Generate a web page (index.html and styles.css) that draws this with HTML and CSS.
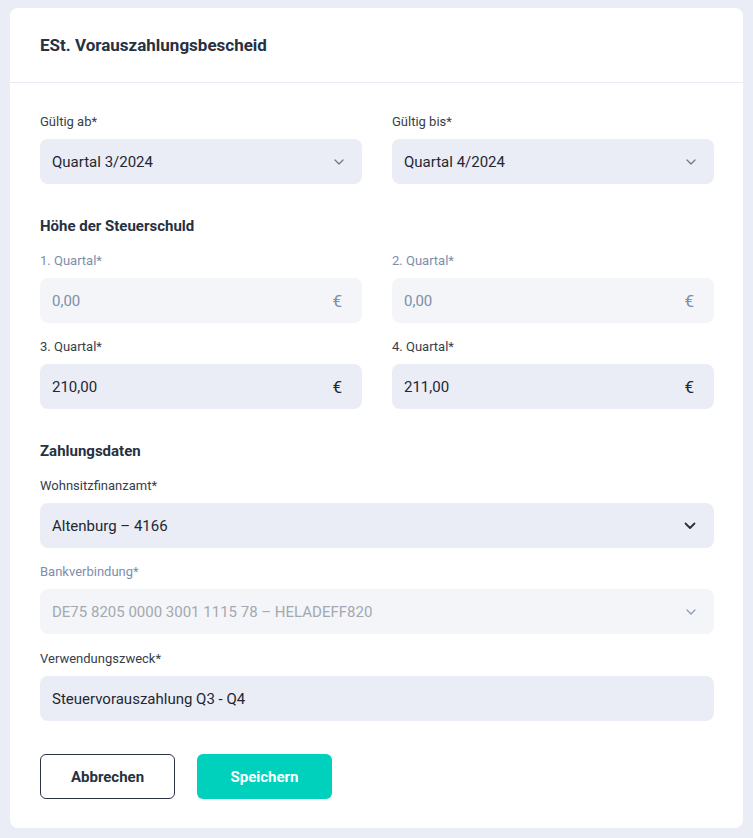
FILE: index.html
```html
<!DOCTYPE html>
<html lang="de">
<head>
<meta charset="utf-8">
<title>ESt. Vorauszahlungsbescheid</title>
<link rel="stylesheet" href="styles.css">
</head>
<body>
<div class="card">
  <div class="card-header">
    <h1 class="title">ESt. Vorauszahlungsbescheid</h1>
  </div>
  <form class="card-body">
    <div class="row">
      <div class="field">
        <label class="label">Gültig ab*</label>
        <div class="control">
          <span class="value">Quartal 3/2024</span>
          <svg class="chev chev-light" width="10" height="6" viewBox="0 0 10 6"><path d="M1 1l4 4 4-4" fill="none" stroke="currentColor" stroke-width="1.2" stroke-linecap="round" stroke-linejoin="round"/></svg>
        </div>
      </div>
      <div class="field">
        <label class="label">Gültig bis*</label>
        <div class="control">
          <span class="value">Quartal 4/2024</span>
          <svg class="chev chev-light" width="10" height="6" viewBox="0 0 10 6"><path d="M1 1l4 4 4-4" fill="none" stroke="currentColor" stroke-width="1.2" stroke-linecap="round" stroke-linejoin="round"/></svg>
        </div>
      </div>
    </div>

    <h2 class="section">Höhe der Steuerschuld</h2>
    <div class="row tight">
      <div class="field">
        <label class="label disabled">1. Quartal*</label>
        <div class="control is-disabled">
          <span class="value">0,00</span>
          <span class="euro">€</span>
        </div>
      </div>
      <div class="field">
        <label class="label disabled">2. Quartal*</label>
        <div class="control is-disabled">
          <span class="value">0,00</span>
          <span class="euro">€</span>
        </div>
      </div>
    </div>
    <div class="row">
      <div class="field">
        <label class="label">3. Quartal*</label>
        <div class="control">
          <span class="value">210,00</span>
          <span class="euro">€</span>
        </div>
      </div>
      <div class="field">
        <label class="label">4. Quartal*</label>
        <div class="control">
          <span class="value">211,00</span>
          <span class="euro">€</span>
        </div>
      </div>
    </div>

    <h2 class="section">Zahlungsdaten</h2>
    <div class="field gap">
      <label class="label">Wohnsitzfinanzamt*</label>
      <div class="control">
        <span class="value">Altenburg – 4166</span>
        <svg class="chev chev-dark" width="12" height="8" viewBox="0 0 12 8"><path d="M1.5 1.5l4.5 4.5 4.5-4.5" fill="none" stroke="currentColor" stroke-width="1.8" stroke-linecap="round" stroke-linejoin="round"/></svg>
      </div>
    </div>
    <div class="field gap gap-wide">
      <label class="label disabled">Bankverbindung*</label>
      <div class="control is-disabled">
        <span class="value muted">DE75 8205 0000 3001 1115 78 – HELADEFF820</span>
        <svg class="chev chev-blue" width="10" height="6" viewBox="0 0 10 6"><path d="M1 1l4 4 4-4" fill="none" stroke="currentColor" stroke-width="1.2" stroke-linecap="round" stroke-linejoin="round"/></svg>
      </div>
    </div>
    <div class="field">
      <label class="label">Verwendungszweck*</label>
      <div class="control">
        <span class="value">Steuervorauszahlung Q3 - Q4</span>
      </div>
    </div>

    <div class="actions">
      <button type="button" class="btn btn-outline">Abbrechen</button>
      <button type="button" class="btn btn-primary">Speichern</button>
    </div>
  </form>
</div>
</body>
</html>
```

FILE: styles.css
```css
* { box-sizing: border-box; }

html, body {
  margin: 0;
  padding: 0;
}

body {
  background: #eaedf5;
  font-family: Roboto, "Liberation Sans", Arial, sans-serif;
  color: #222b38;
  padding: 8px 10px 10px 10px;
}

.card {
  background: #ffffff;
  border-radius: 8px;
  width: 733px;
}

.card-header {
  height: 75px;
  border-bottom: 1px solid #e8ebf2;
  padding: 0 30px;
  display: flex;
  align-items: center;
}

.title {
  margin: 0;
  font-size: 17px;
  font-weight: 700;
  color: #27313f;
}

.card-body {
  padding: 29px 29px 29px 30px;
  display: flex;
  flex-direction: column;
}

.row {
  display: grid;
  grid-template-columns: 1fr 1fr;
  column-gap: 30px;
}

.row.tight,
.field.gap {
  margin-bottom: 14px;
}

.field.gap-wide {
  margin-bottom: 15px;
}

.field {
  display: flex;
  flex-direction: column;
}

.label {
  font-size: 13px;
  line-height: 20px;
  color: #353e4c;
  margin-bottom: 7px;
}

.label.disabled {
  color: #7d8eab;
}

.control {
  height: 45px;
  border-radius: 8px;
  background: #eaedf5;
  display: flex;
  align-items: center;
  justify-content: space-between;
  padding: 0 18px 0 12px;
  font-size: 15px;
  color: #1f2733;
}

.control.is-disabled {
  background: #f3f5f9;
  color: #7d8eab;
}

.value.muted {
  color: #a3a8b1;
}

.euro {
  font-size: 17px;
  padding-right: 2px;
}

.chev-light { color: #6f7682; }
.chev-dark { color: #27313f; }
.chev-blue { color: #8a9bb5; }

.section {
  margin: 32px 0 15px 0;
  font-size: 15px;
  line-height: 20px;
  font-weight: 700;
  color: #27313f;
}

.actions {
  display: flex;
  gap: 22px;
  margin-top: 33px;
}

.btn {
  width: 135px;
  height: 45px;
  border-radius: 6px;
  font-family: Roboto, "Liberation Sans", Arial, sans-serif;
  font-size: 15px;
  font-weight: 700;
  cursor: pointer;
}

.btn-outline {
  background: #ffffff;
  border: 1px solid #2a3443;
  color: #27313f;
}

.btn-primary {
  background: #00d1bd;
  border: none;
  color: #ffffff;
}
```
